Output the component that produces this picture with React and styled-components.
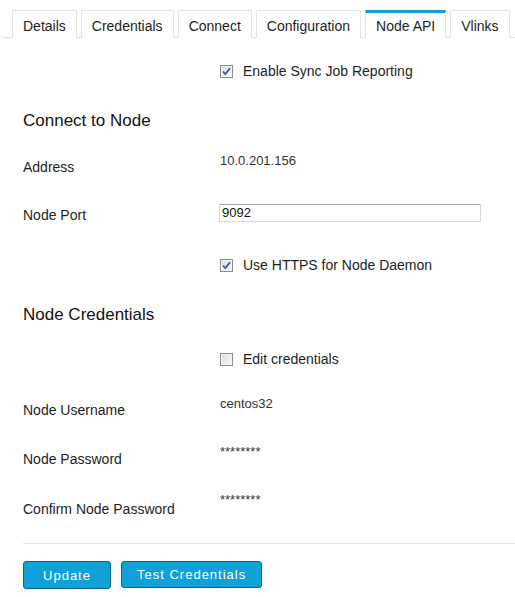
import React from "react";
import styled, { createGlobalStyle } from "styled-components";

const GlobalStyle = createGlobalStyle`
  body {
    margin: 0;
    background: #ffffff;
    font-family: "Liberation Sans", Arial, sans-serif;
    font-size: 14px;
    color: #1e1e1e;
  }
`;

const Page = styled.div`
  width: 515px;
  height: 597px;
  overflow: hidden;
`;

const TabBar = styled.div`
  display: flex;
  gap: 4px;
  margin-left: 3px;
  padding: 10px 0 0 9px;
  border-bottom: 1px solid #e4e4e4;
  height: 27px;
`;

const Tab = styled.div`
  box-sizing: border-box;
  height: 28px;
  padding: 0 10px;
  display: flex;
  align-items: center;
  background: #fff;
  border: 1px solid #e4e4e4;
  border-top: ${(p) => (p.$active ? "3px solid #0fa1d8" : "1px solid #e4e4e4")};
  border-bottom: none;
  padding-top: ${(p) => (p.$active ? "0" : "2px")};
  font-size: 14px;
  color: #1e1e1e;
`;

const Form = styled.div`
  padding: 0 0 0 23px;
`;

const Row = styled.div`
  display: grid;
  grid-template-columns: 197px 1fr;
  align-items: center;
  height: 20px;
  margin-top: ${(p) => p.$gap}px;
`;

const Label = styled.div`
  font-size: 14px;
  white-space: nowrap;
`;

const Value = styled.div`
  font-size: 13px;
  color: #333;
  margin-top: ${(p) => -p.$lift * 2}px;
`;

const Heading = styled.h3`
  margin: ${(p) => p.$gap}px 0 0;
  height: 20px;
  line-height: 20px;
  font-size: 17px;
  font-weight: normal;
  color: #111;
`;

const CheckLine = styled.label`
  display: flex;
  align-items: center;
  gap: 10px;
  font-size: 14px;
`;

const Box = styled.span`
  box-sizing: border-box;
  width: 13px;
  height: 13px;
  border: 1px solid #8c8c8c;
  background: linear-gradient(135deg, #dcdcdc 0%, #fafafa 100%);
  box-shadow: inset 0 0 0 1px #f4f4f4;
  display: flex;
  align-items: center;
  justify-content: center;
`;

const TextInput = styled.input`
  box-sizing: border-box;
  width: 262px;
  height: 18px;
  margin-left: -1px;
  margin-top: -5px;
  padding: 0 2px;
  border: 1px solid #dadada;
  border-top-color: #a9a9a9;
  font-family: "Liberation Sans", Arial, sans-serif;
  font-size: 13px;
  color: #111;
  outline: none;
`;

const Divider = styled.hr`
  border: none;
  border-top: 1px solid #e4e4e4;
  margin: 24px 0 0;
`;

const Actions = styled.div`
  display: flex;
  gap: 10px;
  margin-top: 17px;
  align-items: flex-start;
`;

const Button = styled.button`
  box-sizing: border-box;
  height: ${(p) => p.$h}px;
  min-width: ${(p) => p.$w}px;
  padding: 0 15px;
  background: #0fa1d8;
  border: 1px solid #0b6585;
  border-radius: 3px;
  color: #fff;
  font-family: "Liberation Sans", Arial, sans-serif;
  font-size: 13px;
  letter-spacing: 1px;
`;

function Check({ checked }) {
  return (
    <Box>
      {checked && (
        <svg width="9" height="9" viewBox="0 0 9 9">
          <path d="M1 4.5 L3.3 7 L8 1.2" fill="none" stroke="#3a57a0" strokeWidth="1.8" />
        </svg>
      )}
    </Box>
  );
}

const tabs = ["Details", "Credentials", "Connect", "Configuration", "Node API", "Vlinks"];

export default function App() {
  return (
    <Page>
      <GlobalStyle />
      <TabBar>
        {tabs.map((t) => (
          <Tab key={t} $active={t === "Node API"}>
            {t}
          </Tab>
        ))}
      </TabBar>
      <Form>
        <Row $gap={23}>
          <span />
          <CheckLine>
            <Check checked />
            Enable Sync Job Reporting
          </CheckLine>
        </Row>
        <Heading $gap={30}>Connect to Node</Heading>
        <Row $gap={26}>
          <Label>Address</Label>
          <Value $lift={7}>10.0.201.156</Value>
        </Row>
        <Row $gap={28}>
          <Label>Node Port</Label>
          <TextInput defaultValue="9092" />
        </Row>
        <Row $gap={30}>
          <span />
          <CheckLine>
            <Check checked />
            Use HTTPS for Node Daemon
          </CheckLine>
        </Row>
        <Heading $gap={30}>Node Credentials</Heading>
        <Row $gap={24}>
          <span />
          <CheckLine>
            <Check />
            Edit credentials
          </CheckLine>
        </Row>
        <Row $gap={31}>
          <Label>Node Username</Label>
          <Value $lift={7}>centos32</Value>
        </Row>
        <Row $gap={29}>
          <Label>Node Password</Label>
          <Value $lift={8}>********</Value>
        </Row>
        <Row $gap={30}>
          <Label>Confirm Node Password</Label>
          <Value $lift={10}>********</Value>
        </Row>
        <Divider />
        <Actions>
          <Button $w={88} $h={28}>Update</Button>
          <Button $w={138} $h={27}>Test Credentials</Button>
        </Actions>
      </Form>
    </Page>
  );
}
